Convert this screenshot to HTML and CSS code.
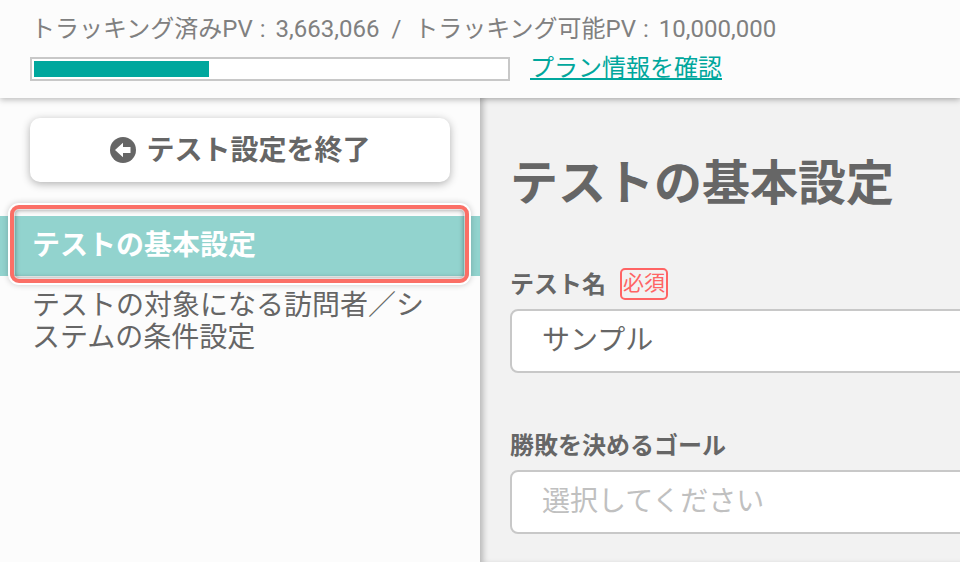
FILE: index.html
```html
<!DOCTYPE html>
<html lang="ja">

<head>
    <meta charset="UTF-8">
    <title>テストの基本設定</title>
    <link rel="stylesheet" href="styles.css">
</head>

<body>
    <div class="header">
        <div class="usage">
            <span>トラッキング済みPV</span><span class="colon">:</span><span>3,663,066</span><span class="slash">/</span><span>トラッキング可能PV</span><span class="colon">:</span><span>10,000,000</span>
        </div>
        <div class="usage-row">
            <div class="bar">
                <div class="bar-fill"></div>
            </div>
            <a class="plan-link" href="#">プラン情報を確認</a>
        </div>
    </div>
    <div class="content">
        <div class="sidebar">
            <div class="back-wrap">
                <a class="back-btn" href="#">
                    <svg class="back-icon" width="26" height="26" viewBox="0 0 26 26">
                        <circle cx="13" cy="13" r="13" fill="#666"></circle>
                        <path d="M5 13L13 5.8V10H20.5V16H13V20.2Z" fill="#fff"></path>
                    </svg>
                    <span class="back-text">テスト設定を終了</span>
                </a>
            </div>
            <ul class="menu">
                <li class="menu-item active">テストの基本設定</li>
                <li class="menu-item">テストの対象になる訪問者／システムの条件設定</li>
            </ul>
            <div class="focus-ring"></div>
        </div>
        <div class="main">
            <h1 class="title">テストの基本設定</h1>
            <div class="field field-name">
                <div class="label">テスト名<span class="required">必須</span></div>
                <div class="input">サンプル</div>
            </div>
            <div class="field">
                <div class="label">勝敗を決めるゴール</div>
                <div class="input placeholder">選択してください</div>
            </div>
        </div>
    </div>
</body>

</html>
```

FILE: styles.css
```css
* {
    margin: 0;
    padding: 0;
    box-sizing: border-box;
    list-style: none;
}

html,
body {
    width: 960px;
    height: 562px;
    overflow: hidden;
}

body {
    font-family: Roboto, "Noto Sans CJK JP", sans-serif;
    color: #666;
    background: #fcfcfc;
}

.header {
    position: relative;
    z-index: 2;
    height: 98px;
    padding: 13px 30px 0;
    background: #fcfcfc;
    box-shadow: 0 2px 6px rgba(0, 0, 0, .25);
}

.usage {
    display: flex;
    padding-left: 1px;
    height: 32px;
    font-size: 24px;
    line-height: 32px;
    color: #808080;
}

.colon {
    margin: 0 10px 0 7px;
}

.slash {
    margin: 0 13px 0 12px;
}

.usage-row {
    display: flex;
    align-items: center;
    margin-top: 11px;
}

.bar {
    width: 480px;
    height: 24px;
    padding: 2px;
    background: #fff;
    border: 2px solid #c8c8c8;
}

.bar-fill {
    width: 175px;
    height: 16px;
    background: #00a79d;
}

.plan-link {
    margin-left: 20px;
    margin-bottom: 2px;
    font-size: 24px;
    line-height: 24px;
    color: #00a79d;
}

.content {
    display: flex;
    height: 464px;
}

.sidebar {
    position: relative;
    width: 480px;
    background: #fcfcfc;
}

.back-wrap {
    padding: 20px 30px 0;
}

.back-btn {
    display: flex;
    align-items: center;
    justify-content: center;
    height: 64px;
    font-size: 28px;
    font-weight: 700;
    color: #666;
    text-decoration: none;
    background: #fff;
    border-radius: 10px;
    box-shadow: 0 2px 8px rgba(0, 0, 0, .3);
}

.back-icon {
    margin-left: 1px;
    margin-right: 10px;
}

.back-text {
    padding-bottom: 4px;
}

.menu {
    margin-top: 34px;
}

.menu-item {
    padding: 0 50px 0 32px;
    font-size: 28px;
    line-height: 32px;
    color: #666;
}

.menu-item.active {
    height: 60px;
    margin-bottom: 14px;
    line-height: 60px;
    font-weight: 700;
    color: #fff;
    background: #92d3ce;
}

.focus-ring {
    position: absolute;
    left: 10px;
    top: 107px;
    width: 459px;
    height: 78px;
    border: 4px solid #fb6f66;
    border-radius: 9px;
    box-shadow: 0 0 0 2px #fff, 0 0 6px 2px rgba(0, 0, 0, .2), inset 0 0 0 1px rgba(255, 255, 255, .5), inset 0 0 5px 1px rgba(0, 0, 0, .4);
}

.main {
    flex: 1;
    padding: 54px 0 0 30px;
    background: #f2f2f2;
    box-shadow: inset 6px 0 6px -3px rgba(0, 0, 0, .25);
    overflow: hidden;
}

.title {
    font-size: 48px;
    line-height: 64px;
    font-weight: 700;
    color: #666;
}

.field-name {
    margin-top: 48px;
    margin-bottom: 52px;
}

.label {
    display: flex;
    align-items: center;
    height: 36px;
    margin-bottom: 9px;
    font-size: 24px;
    font-weight: 700;
    color: #666;
}

.required {
    margin-left: 14px;
    margin-top: 4px;
    padding: 0 1px;
    height: 32px;
    line-height: 27px;
    font-size: 21px;
    font-weight: 400;
    color: #ff6464;
    border: 2px solid #ff6464;
    border-radius: 5px;
}

.input {
    width: 520px;
    height: 64px;
    padding-left: 30px;
    font-size: 28px;
    line-height: 60px;
    color: #666;
    background: #fff;
    border: 2px solid #c8c8c8;
    border-radius: 8px;
}

.placeholder {
    color: #c0c0c0;
}
```
